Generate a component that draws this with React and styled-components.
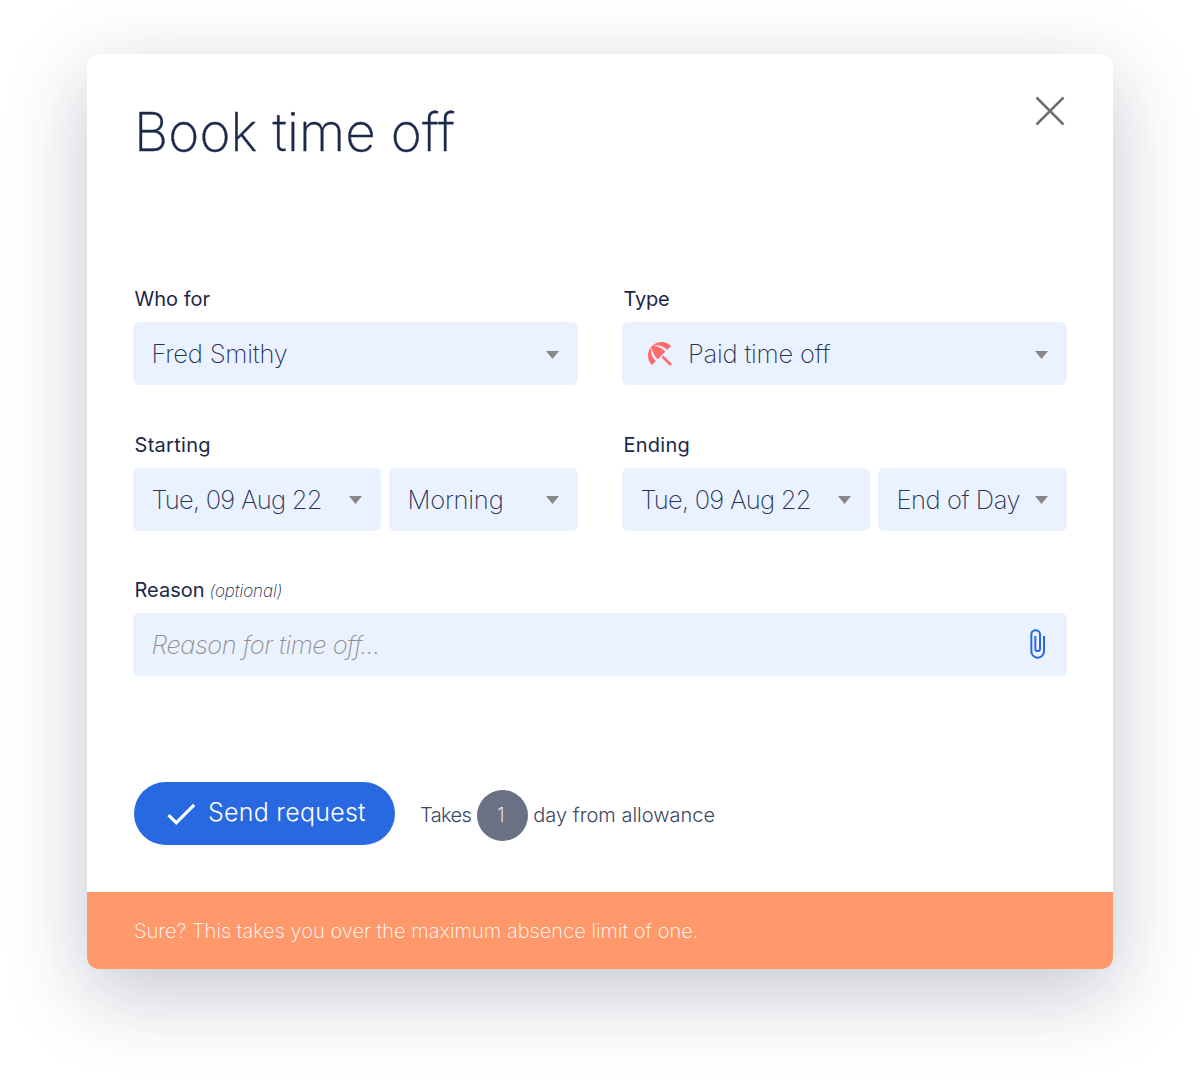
import React from "react";
import styled, { createGlobalStyle } from "styled-components";
import { MdAttachFile, MdBeachAccess, MdCheck } from "react-icons/md";

const GlobalStyle = createGlobalStyle`
  * {
    box-sizing: border-box;
  }
  body {
    margin: 0;
    background: #fff;
    color: #1b2849;
    font-family: Inter, "Liberation Sans", sans-serif;
    font-weight: 300;
  }
`;

const Page = styled.main`
  height: 1088px;
  padding: 54px 87px 0;
  overflow: hidden;
`;

const Dialog = styled.section`
  height: 915px;
  display: flex;
  flex-direction: column;
  border-radius: 12px;
  overflow: hidden;
  background: #fff;
  box-shadow: 0 24px 80px rgba(27, 40, 73, 0.26);
`;

const Header = styled.header`
  height: 228px;
  padding: 40px 48px 0 47px;
  display: flex;
  justify-content: space-between;
  align-items: flex-start;
`;

const Title = styled.h1`
  margin: 0;
  font-size: 53px;
  line-height: 76px;
  font-weight: 200;
  letter-spacing: 0.1px;
  -webkit-text-stroke: 0.4px currentColor;
`;

const CloseButton = styled.button`
  width: 30px;
  height: 30px;
  margin-top: 2px;
  padding: 0;
  border: 0;
  background: none;
  svg {
    display: block;
  }
`;

const Form = styled.form`
  height: 500px;
  padding: 0 46px;
  display: grid;
  grid-template-columns: 1fr 1fr;
  grid-auto-rows: 103px;
  gap: 42.5px 44px;
`;

const Field = styled.div`
  grid-column: ${(props) => (props.$wide ? "1 / -1" : "auto")};
`;

const Label = styled.label`
  height: 40px;
  padding: 2px 0 0 1.5px;
  display: flex;
  align-items: baseline;
  gap: 5px;
  font-size: 20px;
  line-height: 31px;
  font-weight: 400;
  letter-spacing: ${(props) => props.$spacing || "0"};
`;

const Optional = styled.em`
  font-size: 17px;
  font-weight: 200;
  letter-spacing: -0.05px;
`;

const Controls = styled.div`
  display: flex;
  gap: 8px;
`;

const Control = styled.div`
  width: ${(props) => props.$width || "100%"};
  height: 63px;
  padding: 0 19px 0 18.5px;
  display: flex;
  align-items: center;
  border-radius: 6px;
  background: #ebf2ff;
  font-size: 25.5px;
  font-weight: 200;
  white-space: nowrap;
`;

const Value = styled.span`
  flex: 1;
  min-width: 0;
  line-height: 63px;
  color: #26325a;
  letter-spacing: ${(props) => props.$spacing || "-0.2px"};
`;

const Placeholder = styled(Value)`
  font-style: italic;
  color: #8f8f8f;
`;

const TypeIcon = styled(MdBeachAccess)`
  width: 32px;
  height: 32px;
  margin: 0 12.5px 0 3px;
  color: #ff6a6c;
`;

const AttachIcon = styled(MdAttachFile)`
  width: 32px;
  height: 32px;
  margin: 0 -5px 1px 0;
  color: #2869e1;
`;

const Caret = styled.svg`
  width: 13px;
  height: 8px;
  margin-top: 2px;
  fill: #888;
`;

const Actions = styled.div`
  padding: 0 47px;
  display: flex;
  align-items: center;
`;

const SendButton = styled.button`
  width: 261px;
  height: 63px;
  padding: 0 0 3px 28px;
  display: flex;
  align-items: center;
  gap: 8px;
  border: 0;
  border-radius: 32px;
  background: #2869e1;
  color: #fff;
  font: 300 25px/60px Inter, sans-serif;
  letter-spacing: 0.25px;
  white-space: nowrap;
`;

const CheckIcon = styled(MdCheck)`
  width: 38px;
  height: 38px;
  margin-top: 3px;
`;

const Allowance = styled.p`
  margin: 3px 0 0 25px;
  display: flex;
  align-items: center;
  gap: 5.5px;
  color: #3c4763;
  font-size: 20px;
  white-space: nowrap;
`;

const Takes = styled.span`
  letter-spacing: -0.6px;
`;

const Days = styled.b`
  width: 51px;
  height: 51px;
  padding-right: 3px;
  border-radius: 50%;
  background: #6b7184;
  color: #fff;
  font-weight: 200;
  line-height: 51px;
  text-align: center;
`;

const Warning = styled.footer`
  height: 77px;
  margin-top: auto;
  padding: 1px 47px 0;
  background: #ff996b;
  color: #fff;
  font-size: 20px;
  font-weight: 200;
  line-height: 77px;
  letter-spacing: 0.07px;
`;

function Select({ width, icon, spacing, children }) {
  return (
    <Control $width={width}>
      {icon}
      <Value $spacing={spacing}>{children}</Value>
      <Caret viewBox="0 0 13 8">
        <path d="M0 0h13L6.5 8z" />
      </Caret>
    </Control>
  );
}

export default function App() {
  return (
    <>
      <GlobalStyle />
      <Page>
        <Dialog>
          <Header>
            <Title>Book time off</Title>
            <CloseButton type="button" aria-label="Close">
              <svg width="30" height="30" viewBox="0 0 30 30">
                <path
                  d="M1.5 1.5l27 27M28.5 1.5l-27 27"
                  stroke="#707070"
                  strokeWidth="2.5"
                />
              </svg>
            </CloseButton>
          </Header>
          <Form>
            <Field>
              <Label>Who for</Label>
              <Select>Fred Smithy</Select>
            </Field>
            <Field>
              <Label $spacing="-0.2px">Type</Label>
              <Select icon={<TypeIcon />}>Paid time off</Select>
            </Field>
            <Field>
              <Label $spacing="0.3px">Starting</Label>
              <Controls>
                <Select width="248px" spacing="-0.75px">
                  Tue, 09 Aug 22
                </Select>
                <Select width="189px">Morning</Select>
              </Controls>
            </Field>
            <Field>
              <Label $spacing="0.25px">Ending</Label>
              <Controls>
                <Select width="248px" spacing="-0.75px">
                  Tue, 09 Aug 22
                </Select>
                <Select width="189px" spacing="-0.45px">
                  End of Day
                </Select>
              </Controls>
            </Field>
            <Field $wide>
              <Label>
                Reason <Optional>(optional)</Optional>
              </Label>
              <Control>
                <Placeholder $spacing="-0.53px">
                  Reason for time off...
                </Placeholder>
                <AttachIcon />
              </Control>
            </Field>
          </Form>
          <Actions>
            <SendButton type="button">
              <CheckIcon />
              Send request
            </SendButton>
            <Allowance>
              <Takes>Takes</Takes>
              <Days>1</Days>
              day from allowance
            </Allowance>
          </Actions>
          <Warning>
            Sure? This takes you over the maximum absence limit of one.
          </Warning>
        </Dialog>
      </Page>
    </>
  );
}
